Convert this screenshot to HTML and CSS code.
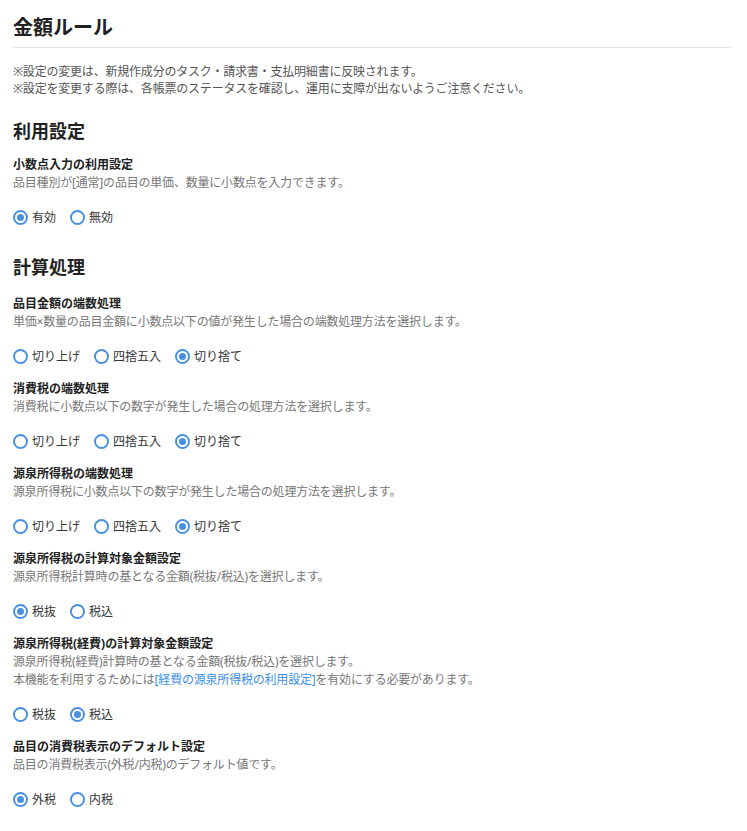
FILE: index.html
```html
<!DOCTYPE html>
<html lang="ja">
<head>
  <meta charset="UTF-8" />
  <meta name="viewport" content="width=device-width, initial-scale=1.0" />
  <title>金額ルール</title>
  <link rel="stylesheet" href="styles.css">
</head>
<body>
  <div class="settings">
    <h1 class="page-title">金額ルール</h1>
    <div class="notes">
      <p>※設定の変更は、新規作成分のタスク・請求書・支払明細書に反映されます。</p>
      <p>※設定を変更する際は、各帳票のステータスを確認し、運用に支障が出ないようご注意ください。</p>
    </div>

    <h2 class="section-title">利用設定</h2>
    <div class="item">
      <div class="item-label">小数点入力の利用設定</div>
      <p class="item-desc">品目種別が[通常]の品目の単価、数量に小数点を入力できます。</p>
      <div class="radios">
        <label class="radio"><input type="radio" name="decimal" checked><span>有効</span></label>
        <label class="radio"><input type="radio" name="decimal"><span>無効</span></label>
      </div>
    </div>

    <h2 class="section-title section-gap">計算処理</h2>
    <div class="item">
      <div class="item-label">品目金額の端数処理</div>
      <p class="item-desc">単価×数量の品目金額に小数点以下の値が発生した場合の端数処理方法を選択します。</p>
      <div class="radios">
        <label class="radio"><input type="radio" name="round1"><span>切り上げ</span></label>
        <label class="radio"><input type="radio" name="round1"><span>四捨五入</span></label>
        <label class="radio"><input type="radio" name="round1" checked><span>切り捨て</span></label>
      </div>
    </div>
    <div class="item">
      <div class="item-label">消費税の端数処理</div>
      <p class="item-desc">消費税に小数点以下の数字が発生した場合の処理方法を選択します。</p>
      <div class="radios">
        <label class="radio"><input type="radio" name="round2"><span>切り上げ</span></label>
        <label class="radio"><input type="radio" name="round2"><span>四捨五入</span></label>
        <label class="radio"><input type="radio" name="round2" checked><span>切り捨て</span></label>
      </div>
    </div>
    <div class="item">
      <div class="item-label">源泉所得税の端数処理</div>
      <p class="item-desc">源泉所得税に小数点以下の数字が発生した場合の処理方法を選択します。</p>
      <div class="radios">
        <label class="radio"><input type="radio" name="round3"><span>切り上げ</span></label>
        <label class="radio"><input type="radio" name="round3"><span>四捨五入</span></label>
        <label class="radio"><input type="radio" name="round3" checked><span>切り捨て</span></label>
      </div>
    </div>
    <div class="item">
      <div class="item-label">源泉所得税の計算対象金額設定</div>
      <p class="item-desc">源泉所得税計算時の基となる金額(税抜/税込)を選択します。</p>
      <div class="radios">
        <label class="radio"><input type="radio" name="base1" checked><span>税抜</span></label>
        <label class="radio"><input type="radio" name="base1"><span>税込</span></label>
      </div>
    </div>
    <div class="item">
      <div class="item-label">源泉所得税(経費)の計算対象金額設定</div>
      <p class="item-desc">源泉所得税(経費)計算時の基となる金額(税抜/税込)を選択します。<br>本機能を利用するためには<a href="#" class="link">[経費の源泉所得税の利用設定]</a>を有効にする必要があります。</p>
      <div class="radios">
        <label class="radio"><input type="radio" name="base2"><span>税抜</span></label>
        <label class="radio"><input type="radio" name="base2" checked><span>税込</span></label>
      </div>
    </div>
    <div class="item">
      <div class="item-label">品目の消費税表示のデフォルト設定</div>
      <p class="item-desc">品目の消費税表示(外税/内税)のデフォルト値です。</p>
      <div class="radios">
        <label class="radio"><input type="radio" name="taxview" checked><span>外税</span></label>
        <label class="radio"><input type="radio" name="taxview"><span>内税</span></label>
      </div>
    </div>
  </div>
</body>
</html>
```

FILE: styles.css
```css
* {
  margin: 0;
  padding: 0;
  box-sizing: border-box;
}
body {
  font-family: "Noto Sans", "Noto Sans CJK JP", sans-serif;
  font-size: 12px;
  color: #333;
  background: #fff;
}
.settings {
  padding: 13px 16px 20px 13px;
}
.page-title {
  font-size: 20px;
  line-height: 30px;
  font-weight: bold;
  color: #222;
  padding-bottom: 4px;
  border-bottom: 1px solid #e3e3e3;
}
.notes {
  margin-top: 15px;
  color: #555;
  line-height: 17px;
  letter-spacing: -0.2px;
}
.section-title {
  font-size: 18px;
  line-height: 28px;
  font-weight: bold;
  color: #222;
  margin-top: 20px;
  margin-bottom: 10px;
}
.section-gap {
  margin-top: 26px;
  margin-bottom: 13px;
}
.item {
  margin-bottom: 13px;
}
.item-label {
  font-weight: bold;
  color: #222;
  line-height: 19px;
}
.item-desc {
  color: #777;
  line-height: 18px;
  letter-spacing: -0.2px;
}
.link {
  color: #3a8ee6;
  text-decoration: none;
}
.radios {
  display: flex;
  gap: 14px;
  margin-top: 15px;
  height: 20px;
  align-items: center;
}
.radio {
  display: flex;
  align-items: center;
  gap: 4px;
  color: #333;
  cursor: pointer;
}
.radio input {
  appearance: none;
  -webkit-appearance: none;
  width: 15px;
  height: 15px;
  border: 2px solid #4a90e2;
  border-radius: 50%;
  background: #fff;
  display: grid;
  place-items: center;
  margin: 0;
}
.radio input:checked::after {
  content: "";
  width: 7px;
  height: 7px;
  border-radius: 50%;
  background: #4a90e2;
}
```
